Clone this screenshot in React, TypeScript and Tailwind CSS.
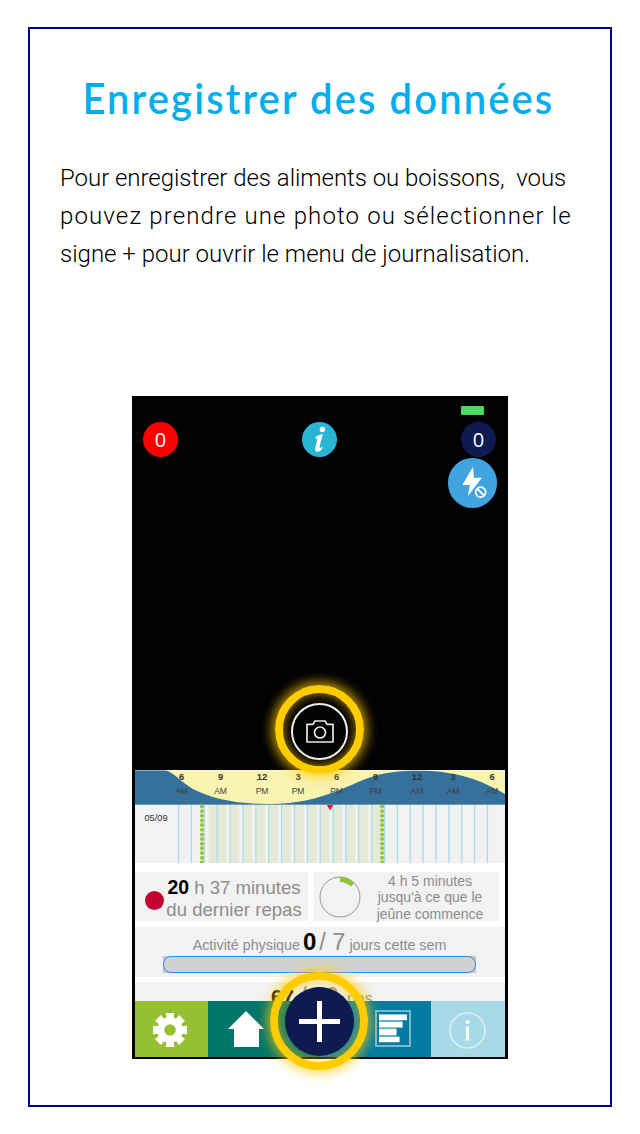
import React from "react";

const hours: [string, string, number][] = [
  ["6", "AM", 46.5],
  ["9", "AM", 85.5],
  ["12", "PM", 127],
  ["3", "PM", 163],
  ["6", "PM", 201.5],
  ["9", "PM", 240.5],
  ["12", "AM", 282],
  ["3", "AM", 318],
  ["6", "AM", 357],
];

const ticks = Array.from({ length: 25 }, (_, i) => 43.6 + i * 12.87);
const bands = [73.7, ...ticks.slice(3, 16)];

function CameraView() {
  return (
    <div className="relative h-[372px] shrink-0 bg-[#020103]">
      <div className="absolute left-[326px] top-[8px] h-[9px] w-[23px] rounded-[1px] bg-[#4cd964]" />
      <div className="absolute left-[8px] top-[24px] flex h-[35px] w-[35px] items-center justify-center rounded-full bg-[#ff0000] font-['Open_Sans',sans-serif] text-[20px] text-white">
        0
      </div>
      <div className="absolute left-[167px] top-[24px] h-[35px] w-[35px] rounded-full bg-[#29b6d6]">
        <svg width="35" height="35" viewBox="0 0 35 35" fill="#fff">
          <circle cx="20.4" cy="7.4" r="2.7" />
          <path d="M13 15.4 Q16.5 12.6 20.8 12 L17.6 24.8 Q17.2 27.2 20.9 24.6 Q19.5 29.6 15.7 29.8 Q12.4 29.8 13.2 26 L15.2 17.4 Q15.4 15.8 13.2 16.6 Z" />
        </svg>
      </div>
      <div className="absolute left-[326px] top-[24px] flex h-[35px] w-[35px] items-center justify-center rounded-full bg-[#0f1a50] font-['Open_Sans',sans-serif] text-[20px] text-white">
        0
      </div>
      <div className="absolute left-[313px] top-[60px] h-[50px] w-[49px] rounded-full bg-[#41a3df]">
        <svg width="49" height="50" viewBox="0 0 49 50">
          <path d="M25 8.7 L14.3 27 H21.8 L20 38 L33.8 19.8 H26 Z" fill="#fff" />
          <circle cx="32.7" cy="34.2" r="5" fill="#41a3df" stroke="#fff" strokeWidth="1.7" />
          <path d="M29.3 30.9 L36.1 37.5" stroke="#fff" strokeWidth="1.8" />
        </svg>
      </div>
    </div>
  );
}

function Timeline() {
  return (
    <svg className="block shrink-0 font-['Liberation_Sans',Arial,sans-serif]" width="370" height="93" viewBox="0 0 370 93">
      <rect width="370" height="93" fill="#fff" />
      <rect width="370" height="35" fill="#35719a" />
      <path
        d="M30 0 C38 2 45 11 58 19 C77 29 103 34 133 34 C163 34 184 28 202 21 C217 15 229 9 241 5.5 C254 2 267 .5 284 .5 C304 .5 323 4 338 9 C350 13 361 19 370 24 V0 Z"
        fill="#f9f3b0"
      />
      <rect width="370" height="1" fill="#fff" opacity=".45" />
      {hours.map(([h, p, x]) => (
        <g key={x} textAnchor="middle" fill="#333">
          <text x={x} y="9.5" fontSize="9.4" fontWeight="700">{h}</text>
          <text x={x} y="24.3" fontSize="8.5" fill="#3f4042">{p}</text>
        </g>
      ))}
      <rect y="35" width="370" height="58" fill="#f2f2f2" />
      <rect y="34" width="370" height="1" fill="#6d9cba" />
      {bands.map((x) => (
        <rect key={x} x={x} y="35" width="9.3" height="58" fill="#e5e9d8" />
      ))}
      {ticks.map((x) => (
        <rect key={x} x={x - 0.6} y="35" width="1.2" height="58" fill="#a5dbe8" />
      ))}
      {[67, 247.1].map((x) => (
        <path key={x} d={`M${x} 36.5 V93`} stroke="#95c239" strokeWidth="4" strokeLinecap="round" strokeDasharray="0 4.65" />
      ))}
      <path d="M192 35 H198.2 L195.1 40.5 Z" fill="#e2093c" />
      <text x="9.5" y="50.6" fontSize="9.2" fill="#333">05/09</text>
    </svg>
  );
}

function Stats() {
  return (
    <div className="flex h-[138px] shrink-0 flex-col overflow-hidden bg-white pt-[9px] font-['Liberation_Sans',Arial,sans-serif] text-[#8c8c8c]">
      <div className="flex h-[49px] shrink-0 gap-[6px]">
        <div className="flex w-[173px] items-center bg-[#f2f2f2] pl-[10px]">
          <span className="mt-[7px] h-[19px] w-[19px] shrink-0 rounded-full bg-[#c3002f]" />
          <div className="ml-[1px] mt-[3px] w-[138px] whitespace-nowrap text-center text-[18.6px] leading-[22px]">
            <b className="text-[19.4px] text-black">20</b> h 37 minutes
            <br />
            du dernier repas
          </div>
        </div>
        <div className="flex w-[185px] items-center bg-[#f2f2f2] pl-[5px]">
          <svg className="shrink-0" width="42" height="42" viewBox="0 0 42 42" fill="none">
            <circle cx="21" cy="21" r="20" stroke="#999" />
            <path d="M21 3.5 A17.5 17.5 0 0 1 33.5 8.8" stroke="#8fc436" strokeWidth="5" />
          </svg>
          <div className="ml-[11px] mt-[2px] w-[116px] whitespace-nowrap text-center text-[14px] leading-[16.3px]">
            4 h 5 minutes
            <br />
            jusqu'à ce que le
            <br />
            jeûne commence
          </div>
        </div>
      </div>
      <div className="mt-[6px] flex h-[50px] shrink-0 flex-col items-center bg-[#f2f2f2]">
        <div className="mr-[1px] h-[29px] whitespace-nowrap text-[14.3px] leading-[30px]">
          Activité physique <b className="-ml-[1px] text-[24px] text-black">0</b>
          <span className="ml-[3px] text-[23.5px]">/ 7</span> jours cette sem
        </div>
        <div className="mr-[1px] h-[17px] w-[313px] bg-[#c6c6c8]">
          <div className="h-full rounded-[8px] border border-[#2b8cf5] bg-[#d0d1d3]" />
        </div>
      </div>
      <div className="mt-[5px] h-[19px] shrink-0 whitespace-nowrap bg-[#f2f2f2] pl-[136px] pt-[2px] text-[16px] leading-[24px]">
        <b className="text-[20.5px] text-black">67</b>
        <span className="text-[23px]"> / 50</span>
        <span className="ml-[4px]"> pas</span>
      </div>
    </div>
  );
}

function TabBar() {
  return (
    <div className="flex h-[56px] shrink-0">
      <div className="flex w-[73px] items-center justify-center bg-[#95c034]">
        <svg className="mr-[3px] mt-[1px]" width="36" height="36" viewBox="-18 -18 36 36" fill="#fff">
          {[0, 45, 90, 135].map((a) => (
            <path key={a} transform={`rotate(${a})`} d="M-4.2 -17 H4.2 L3.4 -10 V10 L4.2 17 H-4.2 L-3.4 10 V-10 Z" />
          ))}
          <circle r="12.8" />
          <circle r="5.8" fill="#95c034" />
        </svg>
      </div>
      <div className="flex w-[75px] items-center justify-center bg-[#02756b]">
        <svg className="mt-[1px]" width="36" height="37" viewBox="0 0 36 37">
          <path d="M18 0 L36 18 H31 V36 H6 V18 H0 Z" fill="#fff" />
        </svg>
      </div>
      <div className="flex w-[74px] bg-[#02756b]">
        <div className="ml-auto w-[37px] bg-[#027aa2]" />
      </div>
      <div className="flex w-[74px] items-center justify-center bg-[#027aa2]">
        <svg className="mb-[1px] mr-[3px]" width="36" height="37" viewBox="0 0 36 37">
          <rect x="1" y="1" width="34" height="35" fill="none" stroke="#78b9cd" strokeWidth="2" />
          <path d="M4 4.5 H32 V10.5 H27.5 V18 H21.5 V26 H24.5 V32.5 H4 Z" fill="#65b0c9" />
          <path d="M4 4.5 H32 V10 H4 Z M4 12 H27.5 V17.3 H4 Z M4 19.3 H21.5 V25 H4 Z M4 27 H24.5 V32 H4 Z" fill="#fff" />
        </svg>
      </div>
      <div className="flex flex-1 items-center justify-center bg-[#a7dae7]">
        <svg className="mr-[2px] mt-[3px]" width="37" height="37" viewBox="0 0 37 37">
          <circle cx="18.5" cy="18.5" r="17.5" fill="none" stroke="#d8f0f5" strokeWidth="1.6" />
          <circle cx="18.5" cy="10" r="2" fill="#fff" />
          <path d="M16.4 14.5 H20 V27.3 H20.8 V28.4 H16.2 V27.3 H17 V15.6 H16.4 Z" fill="#fff" />
        </svg>
      </div>
    </div>
  );
}

function Phone() {
  return (
    <div className="relative flex h-[663px] w-[376px] flex-col border-x-[3px] border-b-[2px] border-t-[2px] border-black">
      <CameraView />
      <Timeline />
      <Stats />
      <TabBar />
      <div className="absolute left-[140px] top-[287px] flex h-[89px] w-[89px] items-center justify-center rounded-full border-[8px] border-[#ffcc00] shadow-[0_0_12px_3px_rgba(255,204,0,0.75),inset_0_0_10px_1px_rgba(255,204,0,0.6)]">
        <div className="mt-[4px] flex h-[57px] w-[57px] items-center justify-center rounded-full border-2 border-[#eeeeee] bg-[#030204]">
          <svg width="28" height="23" viewBox="0 0 28 23" fill="none" stroke="#e9e9e9" strokeWidth="1.7" strokeLinejoin="round">
            <path d="M1 4.4 H7 L9 1 H19 L21 4.4 H27 V22 H1 Z" />
            <circle cx="14" cy="12.5" r="5.5" />
          </svg>
        </div>
      </div>
      <div className="absolute left-[135px] top-[574px] flex h-[98px] w-[98px] items-center justify-center rounded-full border-[8px] border-[#ffcc00] shadow-[0_0_12px_3px_rgba(255,204,0,0.7),inset_0_0_14px_4px_rgba(255,204,0,0.45)]">
        <div className="mt-[1px] flex h-[69px] w-[69px] items-center justify-center rounded-full bg-[#0f1a50]">
          <svg width="41" height="41" viewBox="0 0 41 41">
            <path d="M20.5 2.5 V38.5 M2.5 20.5 H38.5" stroke="#fff" strokeWidth="5" strokeLinecap="square" />
          </svg>
        </div>
      </div>
    </div>
  );
}

export default function App() {
  return (
    <div className="h-[1134px] w-[640px] bg-white px-[28px] pb-[27px] pt-[27px]">
      <main className="flex h-[1080px] flex-col items-center border-2 border-[#000090]">
        <h1 className="mr-[3px] mt-[43px] h-[52px] scale-x-[0.95] whitespace-nowrap font-['Lato',sans-serif] text-[42px] font-semibold leading-[52px] tracking-[2.25px] text-[#00aeef]">
          Enregistrer des données
        </h1>
        <div className="mt-[35px] w-full whitespace-pre pl-[30px] font-['Roboto',sans-serif] text-[24px] font-light leading-[38px] text-black">
          <p className="tracking-[-0.04px]">Pour enregistrer des aliments ou boissons,  vous</p>
          <p className="tracking-[1.13px]">pouvez prendre une photo ou sélectionner le</p>
          <p className="tracking-[0px]">signe + pour ouvrir le menu de journalisation.</p>
        </div>
        <div className="mt-[123px]">
          <Phone />
        </div>
      </main>
    </div>
  );
}
